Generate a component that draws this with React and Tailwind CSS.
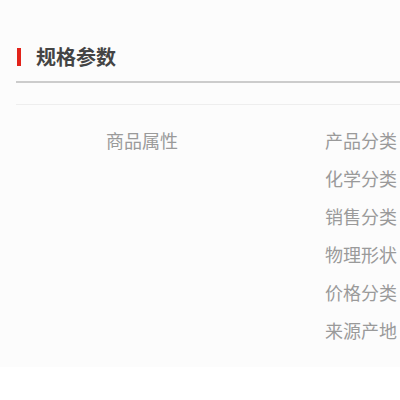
export default function App() {
  const rows = ["产品分类", "化学分类", "销售分类", "物理形状", "价格分类", "来源产地"];
  return (
    <div className="w-[400px] h-[400px] overflow-hidden bg-white" style={{ fontFamily: '"Noto Sans CJK SC", "Noto Sans", sans-serif' }}>
      <div className="h-[367px] bg-[#fcfcfc] pl-4 pt-[32px]">
        <div className="h-[51px] flex items-center border-b-2 border-[#cccccc]">
          <div className="w-[4px] h-[18px] bg-[#e2231a] ml-[1px]" />
          <div className="ml-[15px] text-[20px] font-bold text-[#444444] leading-none">规格参数</div>
        </div>
        <div className="h-[22px] border-b border-[#eeeeee]" />
        <div className="pt-[16px]">
          {rows.map((r, i) => (
            <div key={r} className="h-[38px] flex items-center text-[18px] text-[#9a9a9a] leading-none">
              <div className="w-[252px] text-center">{i === 0 ? "商品属性" : ""}</div>
              <div className="pl-[57px] whitespace-nowrap">{r}</div>
            </div>
          ))}
        </div>
      </div>
    </div>
  );
}
